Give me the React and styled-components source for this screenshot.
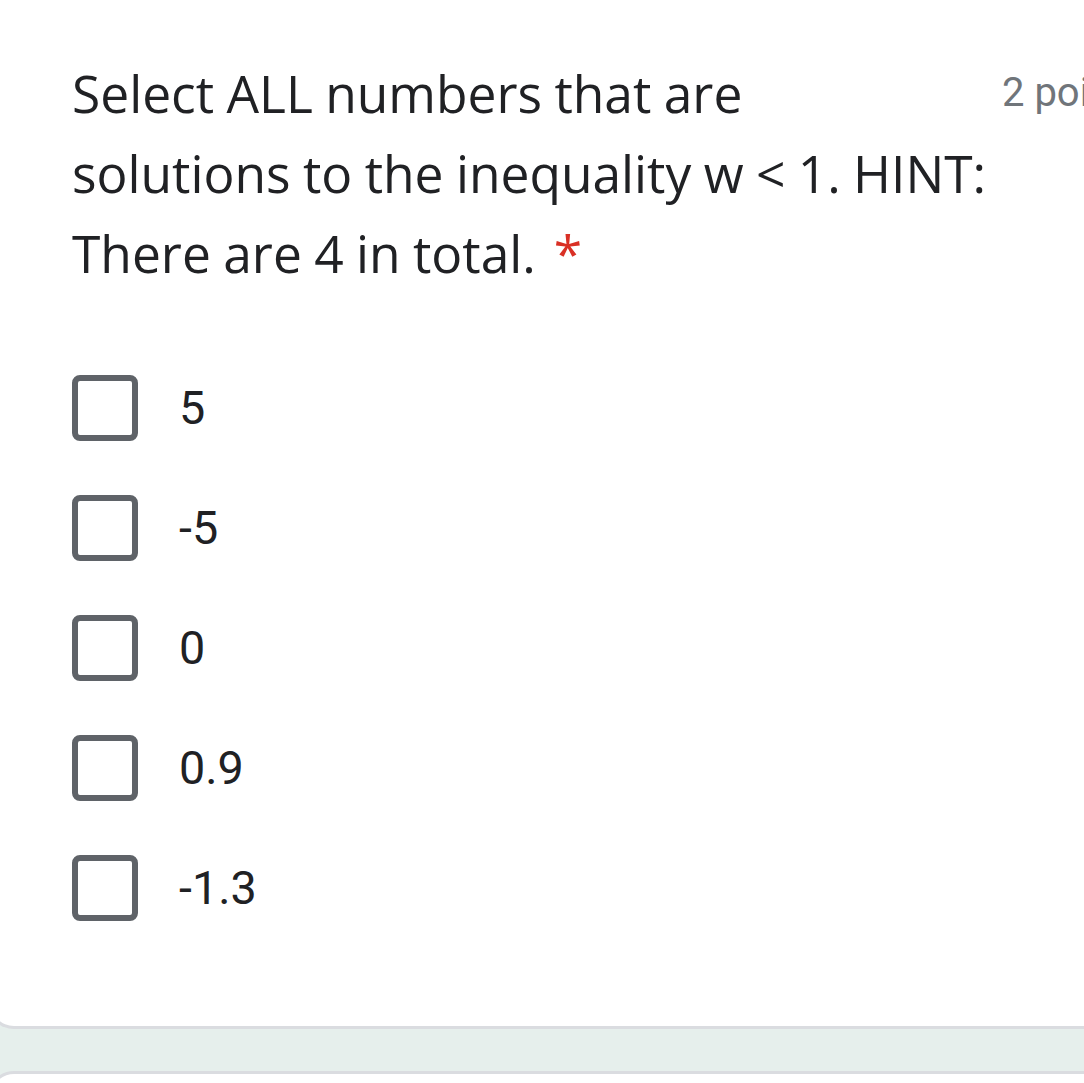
import React from "react";
import styled, { createGlobalStyle } from "styled-components";

const GlobalStyle = createGlobalStyle`
    html, body {
        margin: 0;
        padding: 0;
        background: #e6efec;
        overflow: hidden;
    }
`;

const Page = styled.div`
    width: 1084px;
    height: 1083px;
    overflow: hidden;
    display: flex;
    flex-direction: column;
    gap: 42px;
`;

const Card = styled.div`
    margin-left: -12px;
    width: 1140px;
    flex: none;
    background: #fff;
    border: 3px solid #dadce0;
    border-radius: ${props => (props.top ? "26px 26px 0 0" : "0 0 26px 26px")};
    border-top-color: ${props => (props.top ? "#dadce0" : "transparent")};
    box-sizing: border-box;
    padding: ${props => (props.top ? "0" : "50px 0 105px 81px")};
    height: ${props => (props.top ? "80px" : "auto")};
`;

const Header = styled.div`
    display: flex;
    flex-direction: row;
    align-items: flex-start;
`;

const Title = styled.div`
    width: 930px;
    flex: none;
    font-family: "Open Sans", "Noto Sans", sans-serif;
    font-size: 51.5px;
    line-height: 80px;
    color: #202124;
    word-spacing: -1px;
`;

const Required = styled.span`
    color: #d93025;
    margin-left: 18px;
`;

const Points = styled.div`
    flex: none;
    font-family: Roboto, "Liberation Sans", sans-serif;
    font-size: 40px;
    line-height: 80px;
    color: #70757a;
    white-space: nowrap;
`;

const Options = styled.div`
    display: flex;
    flex-direction: column;
    gap: 54px;
    margin-top: 82px;
`;

const Option = styled.label`
    display: flex;
    flex-direction: row;
    align-items: center;
    height: 66px;
`;

const Box = styled.span`
    width: 66px;
    height: 66px;
    box-sizing: border-box;
    border: 6px solid #5f6368;
    border-radius: 8px;
    flex: none;
`;

const OptionText = styled.span`
    margin-left: 41px;
    font-family: Roboto, "Liberation Sans", sans-serif;
    font-size: 46.7px;
    color: #202124;
`;

const choices = ["5", "-5", "0", "0.9", "-1.3"];

export default function App() {
    return (
        <>
            <GlobalStyle />
            <Page>
                <Card>
                    <Header>
                        <Title>
                            Select ALL numbers that are
                            <br />
                            solutions to the inequality w &lt; 1. HINT: There are 4 in total.
                            <Required>*</Required>
                        </Title>
                        <Points>2 points</Points>
                    </Header>
                    <Options>
                        {choices.map(choice => (
                            <Option key={choice}>
                                <Box />
                                <OptionText>{choice}</OptionText>
                            </Option>
                        ))}
                    </Options>
                </Card>
                <Card top />
            </Page>
        </>
    );
}
